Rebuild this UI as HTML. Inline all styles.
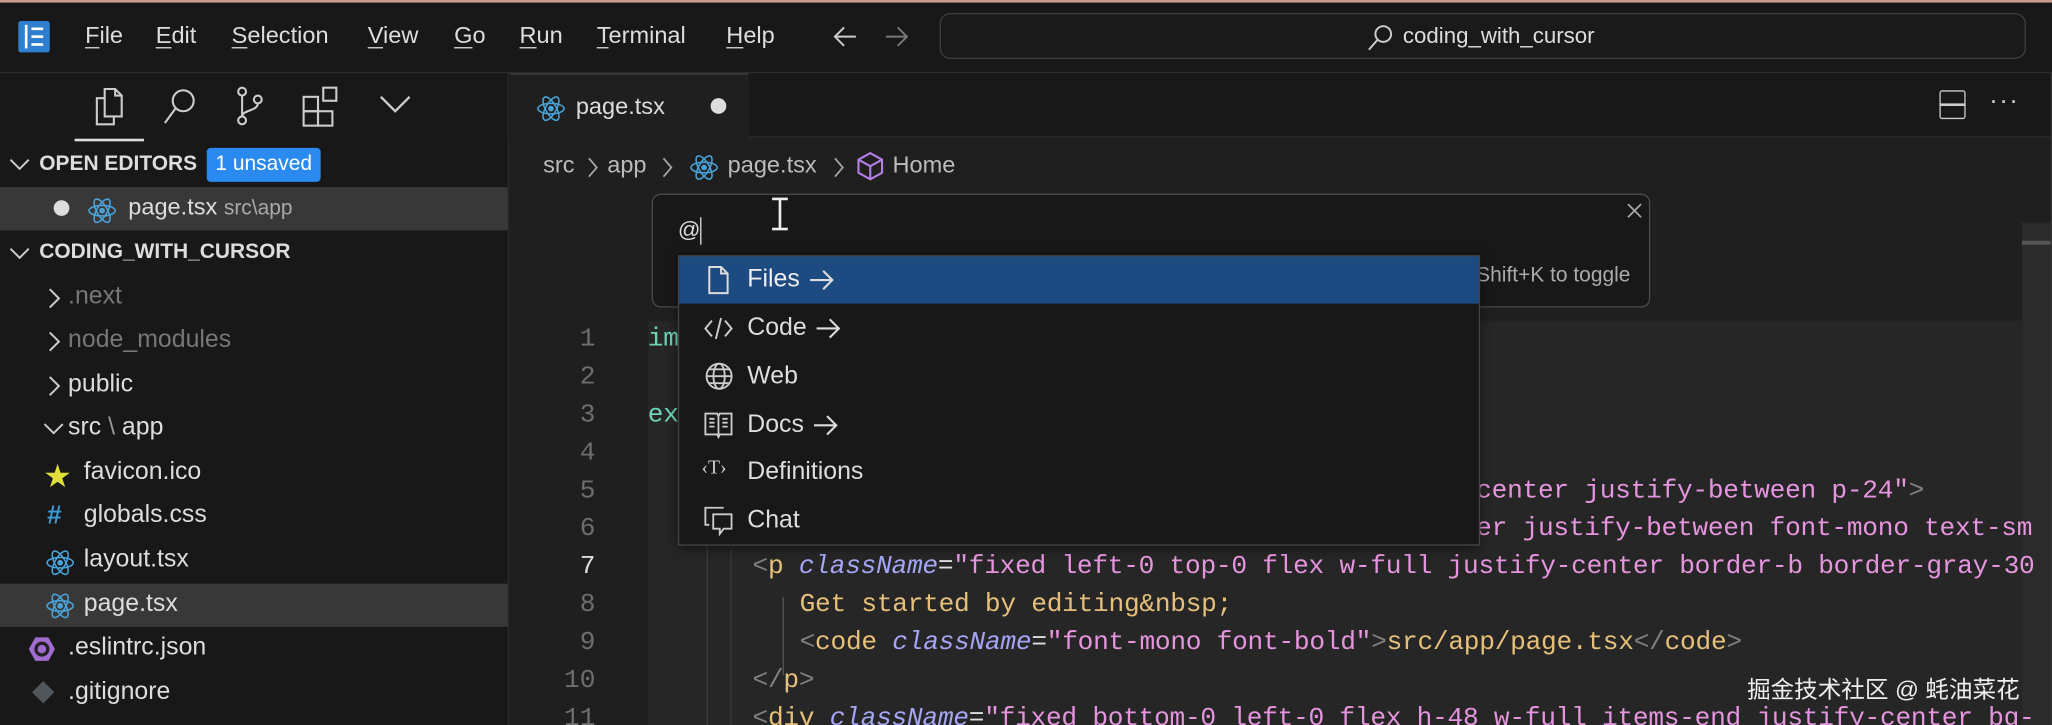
<!DOCTYPE html>
<html><head><meta charset="utf-8"><style>
html,body{margin:0;padding:0;width:2052px;height:725px;overflow:hidden;background:#181818}
#w{position:absolute;left:0;top:0;width:1568px;height:554px;transform:scale(1.30867);transform-origin:0 0;background:#181818;font-family:"Liberation Sans","Noto Sans CJK SC",sans-serif;color:#ccc;overflow:hidden}
.a{position:absolute;white-space:nowrap}
.m{font-size:18px;color:#ddd;top:17px}
.m u{text-decoration:underline;text-underline-offset:3px}
.code{font-family:"Liberation Mono",monospace;font-size:20px;letter-spacing:-0.2px}
.ln{font-family:"Liberation Mono",monospace;font-size:20px;color:#6e6e6e;width:40px;text-align:right;left:415px}
.tg{color:#808080}.tn{color:#e6c07b}.at{color:#a5a5f5;font-style:italic}.st{color:#e595de}.tx{color:#e6c07b}.w{color:#ddd}
.it{font-size:19px;color:#ddd;left:52px}
.ar{display:inline-block;vertical-align:middle;margin-left:6px}
</style></head><body><div id="w">
<div class="a" style="left:0;top:0;width:1568px;height:2px;background:#c99a8e"></div>
<div class="a" style="left:14px;top:16px;width:24px;height:24px;background:#2f7fd0;border-radius:2px"></div>
<div class="a" style="left:19px;top:19px;width:2px;height:18px;background:#fff"></div>
<div class="a" style="left:24px;top:21px;width:9px;height:14px;border-top:2px solid #fff;border-bottom:2px solid #fff;box-sizing:border-box"></div>
<div class="a" style="left:24px;top:27px;width:9px;height:2px;background:#fff"></div>
<div class="a m" style="left:65px"><u>F</u>ile</div>
<div class="a m" style="left:119px"><u>E</u>dit</div>
<div class="a m" style="left:177px"><u>S</u>election</div>
<div class="a m" style="left:281px"><u>V</u>iew</div>
<div class="a m" style="left:347px"><u>G</u>o</div>
<div class="a m" style="left:397px"><u>R</u>un</div>
<div class="a m" style="left:456px"><u>T</u>erminal</div>
<div class="a m" style="left:555px"><u>H</u>elp</div>
<svg class="a" style="left:636px;top:18px" width="20" height="20" viewBox="0 0 20 20" fill="none" stroke="#ccc" stroke-width="1.5"><path d="M18 10H2M9 3L2 10l7 7"/></svg>
<svg class="a" style="left:675px;top:18px" width="20" height="20" viewBox="0 0 20 20" fill="none" stroke="#777" stroke-width="1.5"><path d="M2 10h16M11 3l7 7-7 7"/></svg>
<div class="a" style="left:718px;top:10px;width:830px;height:35px;border:1px solid #3e3e3e;border-radius:8px;box-sizing:border-box;background:#1a1a1a"></div>
<svg class="a" style="left:1043px;top:17px" width="24" height="24" viewBox="0 0 24 24"><circle cx="14" cy="9" r="6" fill="none" stroke="#ccc" stroke-width="1.5"/><path d="M10 13 L3 21" stroke="#ccc" stroke-width="1.5"/></svg>
<div class="a" style="left:1072px;top:18px;font-size:17px;color:#ddd">coding_with_cursor</div>
<div class="a" style="left:0;top:55px;width:1568px;height:1px;background:#2b2b2b"></div>
<svg class="a" style="left:70px;top:64px" width="30" height="34" viewBox="0 0 30 34" fill="none" stroke="#ccc" stroke-width="1.6"><path d="M10 4h8l5 5v16H10z"/><path d="M18 4v5h5"/><path d="M10 11H4v20h13v-6"/></svg>
<svg class="a" style="left:122px;top:66px" width="30" height="30" viewBox="0 0 30 30" fill="none" stroke="#ccc" stroke-width="1.6"><circle cx="18" cy="11" r="8"/><path d="M12 17 L4 28"/></svg>
<svg class="a" style="left:176px;top:64px" width="30" height="34" viewBox="0 0 30 34" fill="none" stroke="#ccc" stroke-width="1.6"><circle cx="9" cy="6" r="3"/><circle cx="9" cy="28" r="3"/><circle cx="21" cy="12" r="3"/><path d="M9 9v16M21 15c0 6-12 5-12 10"/></svg>
<svg class="a" style="left:230px;top:64px" width="32" height="34" viewBox="0 0 32 34" fill="none" stroke="#ccc" stroke-width="1.6"><rect x="2" y="10" width="11" height="11"/><rect x="2" y="21" width="11" height="11"/><rect x="13" y="21" width="11" height="11"/><rect x="17" y="3" width="10" height="10"/></svg>
<svg class="a" style="left:288px;top:70px" width="28" height="20" viewBox="0 0 28 20" fill="none" stroke="#ccc" stroke-width="1.8"><path d="M3 4 L14 15 L25 4"/></svg>
<div class="a" style="left:57px;top:106px;width:53px;height:2px;background:#ddd"></div>
<svg class="a" style="left:6px;top:118px" width="18" height="16" viewBox="0 0 18 16" fill="none" stroke="#ccc" stroke-width="1.5"><path d="M2 4 L9 11 L16 4"/></svg>
<div class="a" style="left:30px;top:117px;font-size:16px;font-weight:bold;color:#ddd">OPEN EDITORS</div>
<div class="a" style="left:158px;top:113px;width:87px;height:26px;background:#2a8af0;border-radius:3px;color:#fff;font-size:16px;text-align:center;line-height:26px">1 unsaved</div>
<div class="a" style="left:0;top:143px;width:388px;height:33px;background:#383838"></div>
<div class="a" style="left:41px;top:153px;width:12px;height:12px;border-radius:50%;background:#ddd"></div>
<div class="a react" style="left:67px;top:150px"></div>
<div class="a" style="left:98px;top:148px;font-size:18px;color:#ddd">page.tsx <span style="font-size:16px;color:#aaa">src\app</span></div>
<svg class="a" style="left:6px;top:186px" width="18" height="16" viewBox="0 0 18 16" fill="none" stroke="#ccc" stroke-width="1.5"><path d="M2 4 L9 11 L16 4"/></svg>
<div class="a" style="left:30px;top:184px;font-size:16px;font-weight:bold;color:#ddd">CODING_WITH_CURSOR</div>
<div class="a" style="left:0;top:446px;width:388px;height:33px;background:#383838"></div>
<svg class="a" style="left:34px;top:219px" width="14" height="18" viewBox="0 0 14 18" fill="none" stroke="#ccc" stroke-width="1.5"><path d="M4 2l7 7-7 7"/></svg><div class="a it" style="top:216px;color:#777">.next</div>
<svg class="a" style="left:34px;top:252px" width="14" height="18" viewBox="0 0 14 18" fill="none" stroke="#ccc" stroke-width="1.5"><path d="M4 2l7 7-7 7"/></svg><div class="a it" style="top:249px;color:#777">node_modules</div>
<svg class="a" style="left:34px;top:286px" width="14" height="18" viewBox="0 0 14 18" fill="none" stroke="#ccc" stroke-width="1.5"><path d="M4 2l7 7-7 7"/></svg><div class="a it" style="top:283px">public</div>
<svg class="a" style="left:31px;top:321px" width="20" height="14" viewBox="0 0 20 14" fill="none" stroke="#ccc" stroke-width="1.5"><path d="M3 3 L10 10 L17 3"/></svg>
<div class="a it" style="top:316px">src<span style="color:#999"> \ </span>app</div>
<div class="a" style="left:34px;top:348px;font-size:20px;color:#e0dc3a">★</div><div class="a it" style="left:64px;top:350px">favicon.ico</div>
<div class="a" style="left:36px;top:383px;font-size:20px;font-weight:bold;color:#3d9ad8">#</div><div class="a it" style="left:64px;top:383px">globals.css</div>
<div class="a react" style="left:35px;top:419px"></div><div class="a it" style="left:64px;top:417px">layout.tsx</div>
<div class="a react" style="left:35px;top:452px"></div><div class="a it" style="left:64px;top:451px">page.tsx</div>
<svg class="a" style="left:21px;top:485px" width="22" height="22" viewBox="0 0 22 22"><polygon points="6,2 16,2 21,11 16,20 6,20 1,11" fill="#a26bd0"/><circle cx="11" cy="11" r="4.5" fill="none" stroke="#222" stroke-width="2.5"/></svg>
<div class="a it" style="left:52px;top:484px">.eslintrc.json</div>
<svg class="a" style="left:23px;top:519px" width="20" height="20" viewBox="0 0 20 20"><rect x="4" y="4" width="12" height="12" transform="rotate(45 10 10)" fill="#50565a"/></svg>
<div class="a it" style="left:52px;top:518px">.gitignore</div>
<div class="a" style="left:388px;top:56px;width:1px;height:498px;background:#2b2b2b"></div>
<div class="a" style="left:389px;top:56px;width:1179px;height:498px;background:#1f1f1f"></div>
<div class="a" style="left:389px;top:56px;width:1179px;height:49px;background:#181818"></div>
<div class="a" style="left:390px;top:56px;width:182px;height:50px;background:#1f1f1f;border-top:1px solid #444;box-sizing:border-box"></div>
<div class="a" style="left:572px;top:104px;width:996px;height:1px;background:#2b2b2b"></div>
<div class="a react" style="left:410px;top:72px"></div>
<div class="a" style="left:440px;top:71px;font-size:18px;color:#ddd">page.tsx</div>
<div class="a" style="left:543px;top:75px;width:12px;height:12px;border-radius:50%;background:#ddd"></div>
<div class="a" style="left:1482px;top:69px;width:20px;height:22px;border:1.6px solid #ccc;border-radius:2px;box-sizing:border-box"></div>
<div class="a" style="left:1482px;top:79px;width:20px;height:1.6px;background:#ccc"></div>
<div class="a" style="left:1520px;top:66px;font-size:20px;color:#ccc;letter-spacing:1px">···</div>
<div class="a" style="left:415px;top:116px;font-size:18px;color:#bbb">src</div>
<svg class="a" style="left:448px;top:119px" width="10" height="18" viewBox="0 0 10 18" fill="none" stroke="#aaa" stroke-width="1.3"><path d="M2 2l6 7-6 7"/></svg>
<div class="a" style="left:464px;top:116px;font-size:18px;color:#bbb">app</div>
<svg class="a" style="left:505px;top:119px" width="10" height="18" viewBox="0 0 10 18" fill="none" stroke="#aaa" stroke-width="1.3"><path d="M2 2l6 7-6 7"/></svg>
<div class="a react" style="left:527px;top:117px"></div>
<div class="a" style="left:556px;top:116px;font-size:18px;color:#bbb">page.tsx</div>
<svg class="a" style="left:636px;top:119px" width="10" height="18" viewBox="0 0 10 18" fill="none" stroke="#aaa" stroke-width="1.3"><path d="M2 2l6 7-6 7"/></svg>
<svg class="a" style="left:654px;top:115px" width="22" height="24" viewBox="0 0 22 24" fill="none" stroke="#b57fe8" stroke-width="1.6"><path d="M11 2 L20 7 V17 L11 22 L2 17 V7 Z M2 7 L11 12 L20 7 M11 12 V22"/></svg>
<div class="a" style="left:682px;top:116px;font-size:18px;color:#bbb">Home</div>
<div class="a" style="left:495px;top:245px;width:1050px;height:309px;background:#262626"></div>
<div class="a" style="left:1545px;top:170px;width:23px;height:384px;background:#2b2b2b"></div>
<div class="a" style="left:1545px;top:184px;width:23px;height:3px;background:#555"></div>
<div class="a" style="left:1567px;top:56px;width:1px;height:498px;background:#333"></div>
<div class="a ln" style="top:248px">1</div>
<div class="a ln" style="top:277px">2</div>
<div class="a ln" style="top:306px">3</div>
<div class="a ln" style="top:335px">4</div>
<div class="a ln" style="top:364px">5</div>
<div class="a ln" style="top:393px">6</div>
<div class="a ln" style="top:422px;color:#ddd">7</div>
<div class="a ln" style="top:451px">8</div>
<div class="a ln" style="top:480px">9</div>
<div class="a ln" style="top:509px">10</div>
<div class="a ln" style="top:538px">11</div>
<div class="a" style="left:540px;top:360px;width:1px;height:194px;background:#3a3a3a"></div>
<div class="a" style="left:558px;top:420px;width:1px;height:134px;background:#3a3a3a"></div>
<div class="a" style="left:598px;top:456px;width:1px;height:60px;background:#555"></div>
<div class="a code" style="left:495px;top:248px;color:#6fd3b8">im</div>
<div class="a code" style="left:495px;top:306px;color:#6fd3b8">ex</div>
<div class="a code st" style="left:1128px;top:364px">center justify-between p-24"<span class="tg">&gt;</span></div>
<div class="a code st" style="left:1128px;top:393px">er justify-between font-mono text-sm</div>
<div class="a code" style="left:575px;top:422px"><span class="tg">&lt;</span><span class="tn">p</span> <span class="at">className</span><span class="w">=</span><span class="st">"fixed left-0 top-0 flex w-full justify-center border-b border-gray-30</span></div>
<div class="a code tx" style="left:611px;top:451px">Get started by editing&amp;nbsp;</div>
<div class="a code" style="left:611px;top:480px"><span class="tg">&lt;</span><span class="tn">code</span> <span class="at">className</span><span class="w">=</span><span class="st">"font-mono font-bold"</span><span class="tg">&gt;</span><span class="tx">src/app/page.tsx</span><span class="tg">&lt;/</span><span class="tn">code</span><span class="tg">&gt;</span></div>
<div class="a code" style="left:575px;top:509px"><span class="tg">&lt;/</span><span class="tn">p</span><span class="tg">&gt;</span></div>
<div class="a code" style="left:575px;top:538px"><span class="tg">&lt;</span><span class="tn">div</span> <span class="at">className</span><span class="w">=</span><span class="st">"fixed bottom-0 left-0 flex h-48 w-full items-end justify-center bg-</span></div>
<div class="a" style="left:1335px;top:513px;font-size:18px;color:#eee">掘金技术社区 @ 蚝油菜花</div>
<div class="a" style="left:498px;top:148px;width:763px;height:87px;background:#181818;border:1px solid #4a4a4a;border-radius:7px;box-sizing:border-box"></div>
<div class="a" style="left:518px;top:166px;font-size:17px;color:#ddd">@</div>
<div class="a" style="left:535px;top:166px;width:1px;height:21px;background:#ddd"></div>
<div class="a" style="left:595px;top:152px;width:2px;height:23px;background:#eee"></div>
<div class="a" style="left:590px;top:151px;width:12px;height:2px;background:#eee"></div>
<div class="a" style="left:590px;top:174px;width:12px;height:2px;background:#eee"></div>
<svg class="a" style="left:1242px;top:154px" width="14" height="14" viewBox="0 0 14 14" fill="none" stroke="#aaa" stroke-width="1.3"><path d="M2 2l10 10M12 2L2 12"/></svg>
<div class="a" style="left:1128px;top:202px;font-size:16px;color:#aaa">Shift+K to toggle</div>
<div class="a" style="left:518px;top:195px;width:613px;height:222px;background:#181818;border:1px solid #454545;box-sizing:border-box;box-shadow:0 2px 8px rgba(0,0,0,.5)"></div>
<div class="a" style="left:519px;top:196px;width:611px;height:36px;background:#1d4a80"></div>
<svg class="a" style="left:538px;top:202px" width="22" height="24" viewBox="0 0 22 24" fill="none" stroke="#ddd" stroke-width="1.5"><path d="M4 2h9l5 5v15H4z M13 2v5h5"/></svg>
<div class="a" style="left:571px;top:203px;font-size:19px;color:#eee">Files<svg class="ar" width="22" height="18" viewBox="0 0 22 18" fill="none" stroke="#ddd" stroke-width="1.6"><path d="M2 9h17M12 2l7 7-7 7"/></svg></div>
<svg class="a" style="left:537px;top:240px" width="24" height="22" viewBox="0 0 24 22" fill="none" stroke="#ccc" stroke-width="1.5"><path d="M7 5 L2 11 L7 17 M17 5 L22 11 L17 17 M14 3 L10 19"/></svg>
<div class="a" style="left:571px;top:240px;font-size:19px;color:#ddd">Code<svg class="ar" width="22" height="18" viewBox="0 0 22 18" fill="none" stroke="#ddd" stroke-width="1.6"><path d="M2 9h17M12 2l7 7-7 7"/></svg></div>
<svg class="a" style="left:538px;top:276px" width="23" height="23" viewBox="0 0 24 24" fill="none" stroke="#ccc" stroke-width="1.5"><circle cx="12" cy="12" r="10"/><ellipse cx="12" cy="12" rx="4.5" ry="10"/><path d="M2 12h20M4 6.5h16M4 17.5h16"/></svg>
<div class="a" style="left:571px;top:277px;font-size:19px;color:#ddd">Web</div>
<svg class="a" style="left:537px;top:313px" width="24" height="24" viewBox="0 0 24 24" fill="none" stroke="#ccc" stroke-width="1.4"><path d="M2 3h9l1 2 1-2h9v16h-9l-1 2-1-2H2z M12 5v14 M5 7h4M5 10h4M5 13h4M15 7h4M15 10h4M15 13h4"/></svg>
<div class="a" style="left:571px;top:314px;font-size:19px;color:#ddd">Docs<svg class="ar" width="22" height="18" viewBox="0 0 22 18" fill="none" stroke="#ddd" stroke-width="1.6"><path d="M2 9h17M12 2l7 7-7 7"/></svg></div>
<div class="a" style="left:536px;top:350px;font-size:15px;color:#ccc;font-family:'Liberation Serif',serif">‹T›</div>
<div class="a" style="left:571px;top:350px;font-size:19px;color:#ddd">Definitions</div>
<svg class="a" style="left:537px;top:385px" width="24" height="26" viewBox="0 0 24 26" fill="none" stroke="#ccc" stroke-width="1.4"><path d="M16 3H2v13h3 M8 8h14v11h-6l-3 4v-4H8z"/></svg>
<div class="a" style="left:571px;top:387px;font-size:19px;color:#ddd">Chat</div>
</div>
<style>.react{width:22px;height:22px}</style>
<script>
document.querySelectorAll('.react').forEach(function(e){e.innerHTML='<svg width="22" height="22" viewBox="0 0 22 22" fill="none" stroke="#4aa3d8" stroke-width="1.2"><ellipse cx="11" cy="11" rx="10" ry="4"/><ellipse cx="11" cy="11" rx="10" ry="4" transform="rotate(60 11 11)"/><ellipse cx="11" cy="11" rx="10" ry="4" transform="rotate(120 11 11)"/><circle cx="11" cy="11" r="1.6" fill="#4aa3d8"/></svg>';});
</script>
</body></html>
